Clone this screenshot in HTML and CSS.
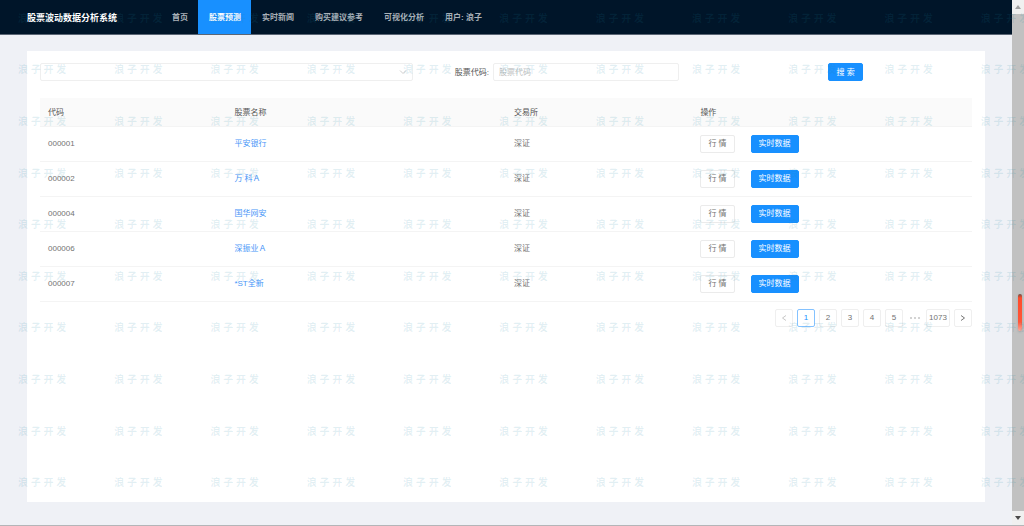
FILE: index.html
```
<!DOCTYPE html>
<html lang="zh-CN">
<head>
<meta charset="utf-8">
<title>股票波动数据分析系统</title>
<link rel="stylesheet" href="styles.css">
</head>
<body>
<div class="window">
  <div class="page">
    <header class="topbar">
      <h1 class="brand">股票波动数据分析系统</h1>
      <nav class="menu">
        <a href="#">首页</a>
        <a href="#" class="active" aria-current="page">股票预测</a>
        <a href="#">实时新闻</a>
        <a href="#">购买建议参考</a>
        <a href="#">可视化分析</a>
        <a href="#">用户: 浪子</a>
      </nav>
    </header>
    <main class="content">
      <section class="card">
        <form class="search">
          <div class="select-wrap">
            <select class="control" aria-label="交易所"><option value=""></option></select>
            <svg class="chevron" viewBox="0 0 8 8" aria-hidden="true"><path d="M1 2.5 4 5.5 7 2.5"/></svg>
          </div>
          <label class="label" for="code">股票代码:</label>
          <input class="control code" id="code" type="text" placeholder="股票代码">
          <button class="btn primary submit" type="button">搜 索</button>
        </form>
        <table class="stocks">
          <thead>
            <tr><th class="narrow">代码</th><th class="wide">股票名称</th><th class="narrow">交易所</th><th class="wide">操作</th></tr>
          </thead>
          <tbody>
            <tr><td>000001</td><td><a href="#">平安银行</a></td><td>深证</td><td><div class="actions"><button class="btn" type="button">行 情</button><button class="btn primary" type="button">实时数据</button></div></td></tr>
            <tr><td>000002</td><td><a href="#">万 科Ａ</a></td><td>深证</td><td><div class="actions"><button class="btn" type="button">行 情</button><button class="btn primary" type="button">实时数据</button></div></td></tr>
            <tr><td>000004</td><td><a href="#">国华网安</a></td><td>深证</td><td><div class="actions"><button class="btn" type="button">行 情</button><button class="btn primary" type="button">实时数据</button></div></td></tr>
            <tr><td>000006</td><td><a href="#">深振业Ａ</a></td><td>深证</td><td><div class="actions"><button class="btn" type="button">行 情</button><button class="btn primary" type="button">实时数据</button></div></td></tr>
            <tr><td>000007</td><td><a href="#">*ST全新</a></td><td>深证</td><td><div class="actions"><button class="btn" type="button">行 情</button><button class="btn primary" type="button">实时数据</button></div></td></tr>
          </tbody>
        </table>
        <nav class="pager" aria-label="分页">
          <button type="button" disabled aria-label="上一页"><svg viewBox="0 0 8 8"><path d="M6 1.5 2.5 4 6 6.5"/></svg></button>
          <button type="button" class="current">1</button>
          <button type="button">2</button>
          <button type="button">3</button>
          <button type="button">4</button>
          <button type="button">5</button>
          <span class="dots"><i></i><i></i><i></i></span>
          <button type="button" class="last">1073</button>
          <button type="button" aria-label="下一页"><svg viewBox="0 0 8 8"><path d="M2 1.5 5.5 4 2 6.5"/></svg></button>
        </nav>
      </section>
    </main>
  </div>
  <div class="scrollbar" aria-hidden="true">
    <span class="arrow"><svg viewBox="0 0 6 4"><path d="M0 4 3 0 6 4Z" fill="#a0a0a0"/></svg></span>
    <span class="track"></span>
    <span class="arrow"><svg viewBox="0 0 6 4"><path d="M0 0 3 4 6 0Z" fill="#4a4a4a"/></svg></span>
    <span class="marker"></span>
  </div>
  <div class="watermark" id="watermark" aria-hidden="true"></div>
</div>
<script src="watermark.js"></script>
</body>
</html>
```
FILE: styles.css
```
* { box-sizing: border-box; }
body {
  margin: 0;
  background: #eff1f6;
  color: #737373;
  font: 8px/12px "Liberation Sans", "Noto Sans CJK SC", sans-serif;
}
button, input, select { font: inherit; color: inherit; }
a { text-decoration: none; }
.window {
  position: relative;
  display: flex;
  min-height: 100vh;
  overflow: hidden;
  border-bottom: 1px solid #b4b5b8;
}
.page { flex: 1; display: flex; flex-direction: column; }

.topbar {
  display: flex;
  height: 35px;
  padding-left: 27px;
  background: #001529;
  border-bottom: 1px solid #5b6675;
}
.brand {
  width: 134px;
  margin: 0;
  color: #fff;
  font-size: 9px;
  line-height: 36px;
  white-space: nowrap;
}
.menu { display: flex; }
.menu a {
  padding: 0 10px 0 11px;
  color: #aab1b8;
  font-weight: bold;
  line-height: 36px;
  height: 34px;
  white-space: nowrap;
}
.menu .active { background: #1890ff; color: #fff; }

.content { flex: 1; display: flex; padding: 16px 27px 23px; }
.card { flex: 1; padding: 12px 13px; background: #fff; }

.search { display: flex; align-items: center; margin-bottom: 17px; }
.control {
  height: 18px;
  border: 1px solid #efefef;
  border-radius: 2px;
  background: #fff;
  outline: none;
}
.select-wrap { position: relative; width: 40%; }
.select-wrap .control { display: block; width: 100%; appearance: none; }
.chevron {
  position: absolute;
  top: 5px;
  right: 6px;
  width: 8px;
  height: 8px;
  fill: none;
  stroke: #cfcfcf;
}
.label { margin: 0 4px 0 42px; padding-top: 1px; color: #555; }
.code { width: 20%; padding: 1px 5px 0; }
.code::placeholder { color: #bfbfbf; opacity: 1; }
.btn {
  height: 18px;
  padding: 0 7px;
  border: 1px solid #ebebeb;
  border-radius: 2px;
  background: #fff;
  line-height: 16px;
  white-space: nowrap;
}
.btn.primary { border-color: #1890ff; background: #1890ff; color: #fff; }
.submit { margin-left: 149px; padding-top: 1px; }

.stocks { width: 100%; border-collapse: collapse; table-layout: fixed; }
.stocks th, .stocks td {
  padding: 0 8px;
  border-bottom: 1px solid #f4f4f4;
  text-align: left;
}
.stocks th { height: 28px; padding-top: 2px; background: #fafafa; color: #555; font-weight: normal; }
.stocks td { height: 35px; }
.stocks td a { color: #4896f8; }
.narrow { width: 20%; }
.wide { width: 30%; }
.actions { display: flex; gap: 16px; }

.pager { display: flex; justify-content: flex-end; gap: 4px; margin-top: 7px; }
.pager button {
  display: flex;
  align-items: center;
  justify-content: center;
  width: 18px;
  height: 18px;
  padding: 0;
  border: 1px solid #efefef;
  border-radius: 2px;
  background: #fff;
}
.pager .current { border-color: #84c2ff; color: #1890ff; }
.pager .last { width: 24px; }
.pager svg { width: 8px; height: 8px; fill: none; stroke: #777; }
.pager button:disabled svg { stroke: #c8c8c8; }
.dots { display: flex; align-items: center; justify-content: center; gap: 2px; width: 15px; }
.dots i { width: 2px; height: 2px; border-radius: 50%; background: #c4c4c4; }

.scrollbar { position: relative; display: flex; flex-direction: column; width: 12px; background: #c1c1c1; }
.arrow { display: flex; align-items: center; justify-content: center; height: 14px; background: #f0f0f0; }
.arrow svg { width: 6px; height: 4px; }
.track { flex: 1; }
.marker {
  position: absolute;
  top: 56%;
  right: 2px;
  width: 4px;
  height: 37px;
  border-radius: 2px;
  background: linear-gradient(#6b5048, #ff4b2b 4px, #ff5638 28px, #ffa898);
  box-shadow: 0 1px 2px #8888;
}

.watermark {
  position: absolute;
  inset: -7px -53px 16px 18px;
  display: grid;
  grid-template-columns: repeat(11, 1fr);
  grid-template-rows: repeat(10, 1fr);
  align-items: center;
  color: rgba(24, 130, 160, 0.13);
  font-size: 10px;
  font-weight: bold;
  white-space: nowrap;
  pointer-events: none;
}
```
FILE: watermark.js
```
const layer = document.getElementById("watermark");
for (let i = 0; i < 110; i++) {
  const mark = document.createElement("span");
  mark.textContent = "浪 子 开 发";
  layer.append(mark);
}
```
